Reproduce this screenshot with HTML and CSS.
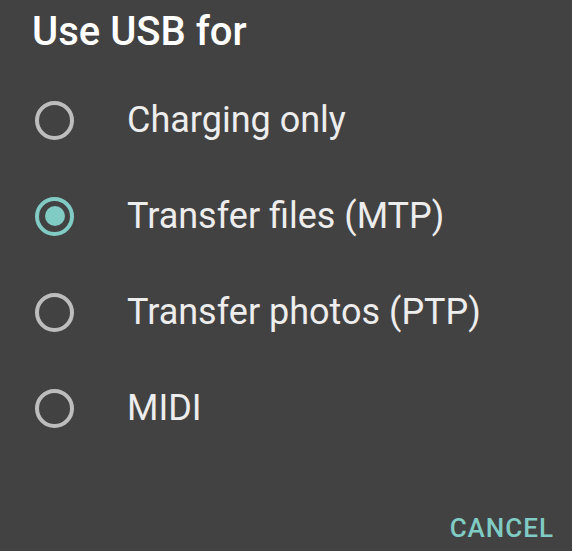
FILE: index.html
```html
<!DOCTYPE html>
<html>
<head>
<meta charset="utf-8">
<link rel="stylesheet" href="styles.css">
</head>
<body>
<div class="dialog">
  <h1 class="title">Use USB for</h1>
  <ul class="options">
    <li class="option"><span class="radio"></span><span class="label">Charging only</span></li>
    <li class="option"><span class="radio checked"></span><span class="label">Transfer files (MTP)</span></li>
    <li class="option"><span class="radio"></span><span class="label">Transfer photos (PTP)</span></li>
    <li class="option"><span class="radio"></span><span class="label">MIDI</span></li>
  </ul>
  <div class="actions"><span class="btn">CANCEL</span></div>
</div>
</body>
</html>
```
FILE: styles.css
```css
html, body {
  margin: 0;
  padding: 0;
  background: #424242;
}
.dialog {
  width: 572px;
  height: 551px;
  box-sizing: border-box;
  font-family: Roboto, "Liberation Sans", sans-serif;
  display: flex;
  flex-direction: column;
}
.title {
  margin: 0;
  padding: 8px 0 0 32px;
  font-size: 40px;
  font-weight: 500;
  color: #ffffff;
  line-height: 48px;
}
.options {
  list-style: none;
  margin: 16px 0 0 0;
  padding: 0;
}
.option {
  height: 96px;
  display: flex;
  align-items: center;
  padding-left: 35px;
}
.radio {
  width: 31px;
  height: 31px;
  border: 4px solid #bdbdbd;
  border-radius: 50%;
  display: flex;
  align-items: center;
  justify-content: center;
  flex: none;
}
.radio.checked {
  border-color: #80cbc4;
}
.radio.checked::after {
  content: "";
  width: 20px;
  height: 20px;
  border-radius: 50%;
  background: #80cbc4;
}
.label {
  margin-left: 53px;
  font-size: 36px;
  color: #ededed;
}
.actions {
  margin-top: auto;
  display: flex;
  justify-content: flex-end;
  padding: 0 18px 3px 0;
}
.btn {
  font-size: 26px;
  font-weight: 500;
  color: #80cbc4;
  line-height: 40px;
  letter-spacing: 1px;
}
```
